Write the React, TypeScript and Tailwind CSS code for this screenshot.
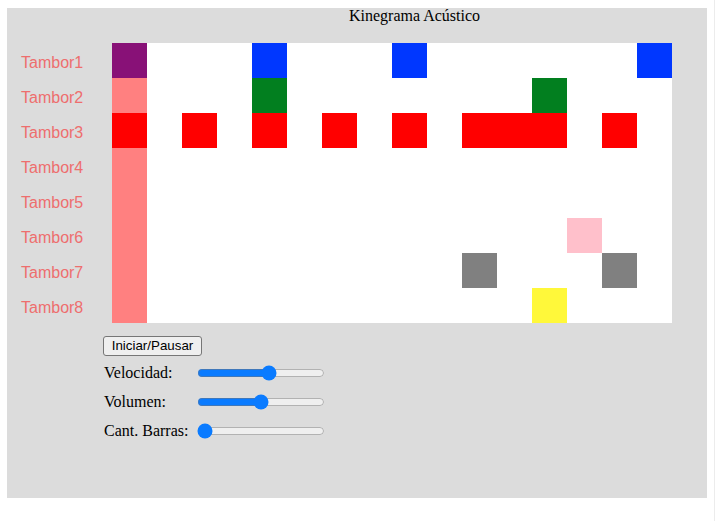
import React from "react";

const COLS = 16;

const drums = [
  "Tambor1",
  "Tambor2",
  "Tambor3",
  "Tambor4",
  "Tambor5",
  "Tambor6",
  "Tambor7",
  "Tambor8",
];

// colour of each drum's active notes
const noteColors = [
  "bg-[#0037ff]",
  "bg-[#027f1f]",
  "bg-[#ff0000]",
  "bg-[#ff0000]",
  "bg-[#ff0000]",
  "bg-[#ffc0cb]",
  "bg-[#808080]",
  "bg-[#fff83a]",
];

const pattern: number[][] = [
  [0, 4, 8, 15],
  [4, 12],
  [0, 2, 4, 6, 8, 10, 11, 12, 14],
  [],
  [],
  [13],
  [10, 14],
  [12],
];

const playhead = 0;

const Cell = ({ row, col }: { row: number; col: number }) => {
  const on = pattern[row].includes(col);
  let cls = "bg-white";
  if (col === playhead) {
    if (on && row === 0) cls = "bg-[#881177]";
    else if (on) cls = noteColors[row];
    else cls = "bg-[#ff8080]";
  } else if (on) {
    cls = noteColors[row];
  }
  return <div className={`h-[35px] w-[35px] ${cls}`} />;
};

const SliderRow = ({
  label,
  value,
}: {
  label: string;
  value: number;
}) => (
  <div className="flex h-[29px] items-center">
    <span className="w-[94px] pl-[1px] font-['Liberation_Serif',serif] text-[16px] text-black">
      {label}
    </span>
    <input
      type="range"
      min={0}
      max={100}
      defaultValue={value}
      className="m-0 h-[16px] w-[128px] accent-[#0a7bff]"
    />
  </div>
);

export default function App() {
  return (
    <div className="flex min-h-screen bg-white">
      <div className="pl-[7px] pt-[8px]">
        <div className="h-[490px] w-[700px] bg-[#dcdcdc]">
          <div className="pl-[115px] text-center font-['Liberation_Serif',serif] text-[16px] leading-4 text-black">
            Kinegrama Acústico
          </div>

          <div className="mt-[19px] flex">
            <div className="flex w-[105px] flex-col">
              {drums.map((d) => (
                <div
                  key={d}
                  className="flex h-[35px] items-center pl-[14px] pt-[5px] font-['Liberation_Sans',Arial,sans-serif] text-[16px] text-[#ee6e6e]"
                >
                  {d}
                </div>
              ))}
            </div>
            <div className="grid w-[560px] grid-cols-[repeat(16,35px)]">
              {drums.map((d, r) =>
                Array.from({ length: COLS }).map((_, c) => (
                  <Cell key={`${d}-${c}`} row={r} col={c} />
                ))
              )}
            </div>
          </div>

          <div className="ml-[96px] mt-[13px] flex flex-col items-start">
            <button className="block h-[20px] w-[99px] rounded-[3px] border border-[#767676] bg-[#efefef] font-['Liberation_Sans',Arial,sans-serif] text-[13.33px] leading-none text-black">
              Iniciar/Pausar
            </button>
            <div className="mt-[2px]">
              <SliderRow label="Velocidad:" value={57} />
              <SliderRow label="Volumen:" value={50} />
              <SliderRow label="Cant. Barras:" value={0} />
            </div>
          </div>
        </div>
      </div>
      <div className="ml-auto mr-[2px] w-[1px] bg-[#ececec]" />
    </div>
  );
}
